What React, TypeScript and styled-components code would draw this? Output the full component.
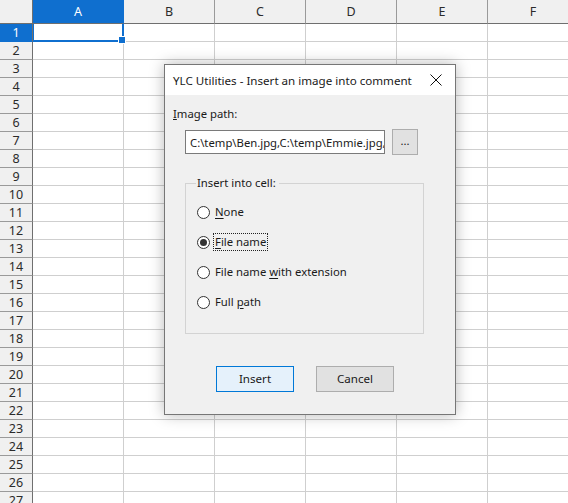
import React, { useState } from "react";
import styled, { createGlobalStyle } from "styled-components";

const GlobalStyle = createGlobalStyle`
  html, body {
    margin: 0;
    padding: 0;
    background: #ffffff;
    overflow: hidden;
  }
  body {
    font-family: "Noto Sans", "Open Sans", sans-serif;
  }
`;

const COLS = ["A", "B", "C", "D", "E", "F"];
const ROWS = Array.from({ length: 27 }, (_, i) => i + 1);

const Page = styled.div`
  position: relative;
  width: 568px;
  height: 503px;
  overflow: hidden;
`;

const Sheet = styled.div`
  display: grid;
  grid-template-columns: 33px repeat(6, 91px);
  grid-auto-rows: 18px;
  grid-template-rows: 24px;
`;

const Corner = styled.div`
  background: #f0f0f0;
  border-right: 1px solid #6f6f6f;
  border-bottom: 1px solid #6f6f6f;
  box-sizing: border-box;
`;

const ColHead = styled.div<{ $active?: boolean }>`
  box-sizing: border-box;
  display: flex;
  align-items: center;
  justify-content: center;
  font-size: 12.5px;
  color: ${(p) => (p.$active ? "#ffffff" : "#2b2b2b")};
  background: ${(p) => (p.$active ? "#0f6fcf" : "#f0f0f0")};
  border-right: 1px solid ${(p) => (p.$active ? "#0f6fcf" : "#9a9a9a")};
  border-bottom: 1px solid #6f6f6f;
`;

const RowHead = styled.div<{ $active?: boolean }>`
  box-sizing: border-box;
  display: flex;
  align-items: center;
  justify-content: center;
  font-size: 12.5px;
  color: ${(p) => (p.$active ? "#ffffff" : "#2b2b2b")};
  background: ${(p) => (p.$active ? "#0f6fcf" : "#f0f0f0")};
  border-right: 1px solid #6f6f6f;
  border-bottom: 1px solid ${(p) => (p.$active ? "#0f6fcf" : "#9a9a9a")};
`;

const Cell = styled.div<{ $selected?: boolean }>`
  position: relative;
  box-sizing: border-box;
  background: #ffffff;
  border-right: 1px solid #cfcfcf;
  border-bottom: 1px solid #cfcfcf;
  ${(p) =>
    p.$selected &&
    `
    border: 2px solid #0f6fcf;
    border-top: none;
    border-left: 1px solid #0f6fcf;
  `}
`;

const FillHandle = styled.span`
  position: absolute;
  right: -4px;
  bottom: -4px;
  width: 6px;
  height: 6px;
  background: #0f6fcf;
  border: 1px solid #ffffff;
  z-index: 1;
`;

const Dialog = styled.div`
  position: absolute;
  left: 164px;
  top: 64px;
  width: 292px;
  height: 351px;
  box-sizing: border-box;
  background: #f0f0f0;
  border: 1px solid #767676;
  box-shadow: 0 0 14px rgba(0, 0, 0, 0.28);
  display: flex;
  flex-direction: column;
  font-family: "Noto Sans", "Open Sans", sans-serif;
  font-size: 11.3px;
  color: #1a1a1a;
`;

const TitleBar = styled.div`
  height: 30px;
  background: #ffffff;
  display: flex;
  align-items: center;
  justify-content: space-between;
  padding: 0 9px 0 8px;
  font-size: 11.6px;
  color: #1a1a1a;
`;

const CloseButton = styled.button`
  border: none;
  background: none;
  padding: 0;
  width: 16px;
  height: 16px;
  display: flex;
  align-items: center;
  justify-content: center;
  margin-right: 2px;
`;

const Body = styled.div`
  flex: 1;
  display: flex;
  flex-direction: column;
  padding: 11px 0 0 8px;
`;

const FieldLabel = styled.div`
  line-height: 16px;
  margin-bottom: 7px;
`;

const PathRow = styled.div`
  display: flex;
  align-items: center;
  gap: 7px;
  padding-left: 12px;
`;

const PathInput = styled.div`
  width: 200px;
  height: 24px;
  box-sizing: border-box;
  background: #ffffff;
  border: 1px solid #7a7a7a;
  padding: 0 0 0 4px;
  display: flex;
  align-items: center;
  overflow: hidden;
  white-space: nowrap;
`;

const SmallButton = styled.button`
  width: 26px;
  height: 26px;
  box-sizing: border-box;
  background: #e1e1e1;
  border: 1px solid #adadad;
  font-family: inherit;
  font-size: 11.3px;
  padding: 0 0 4px;
  color: #1a1a1a;
`;

const Group = styled.fieldset`
  margin: 21px 0 0 12px;
  width: 239px;
  height: 158px;
  box-sizing: border-box;
  border: 1px solid #d3d3d3;
  padding: 13px 0 0 11px;
  display: flex;
  flex-direction: column;
  gap: 12px;
`;

const Legend = styled.legend`
  padding: 0 3px 0 1px;
  margin-left: -1px;
  line-height: 14px;
`;

const RadioRow = styled.label`
  display: flex;
  align-items: center;
  gap: 4px;
  height: 18px;
  cursor: default;
`;

const RadioCircle = styled.span<{ $checked?: boolean }>`
  width: 13px;
  height: 13px;
  box-sizing: border-box;
  border-radius: 50%;
  border: 1px solid #333333;
  background: #ffffff;
  display: flex;
  align-items: center;
  justify-content: center;
  &::after {
    content: "";
    width: 7px;
    height: 7px;
    border-radius: 50%;
    background: ${(p) => (p.$checked ? "#333333" : "transparent")};
  }
`;

const RadioText = styled.span<{ $focused?: boolean }>`
  padding: 0 1px;
  line-height: 16px;
  outline: ${(p) => (p.$focused ? "1px dotted #222222" : "none")};
  u {
    text-underline-offset: 2px;
  }
`;

const Buttons = styled.div`
  display: flex;
  gap: 22px;
  padding-left: 43px;
  margin-top: 32px;
`;

const DialogButton = styled.button<{ $primary?: boolean }>`
  width: 78px;
  height: 26px;
  box-sizing: border-box;
  font-family: inherit;
  font-size: 11.6px;
  color: #1a1a1a;
  background: ${(p) => (p.$primary ? "#e5f1fb" : "#e1e1e1")};
  border: 1px solid ${(p) => (p.$primary ? "#0078d7" : "#adadad")};
  padding: 0 0 1px;
`;

const options = [
  { key: "none", pre: "", u: "N", post: "one" },
  { key: "file", pre: "", u: "F", post: "ile name" },
  { key: "ext", pre: "File name ", u: "w", post: "ith extension" },
  { key: "full", pre: "Full ", u: "p", post: "ath" },
];

const App = () => {
  const [choice, setChoice] = useState<string>("file");

  return (
    <Page>
      <GlobalStyle />
      <Sheet>
        <Corner />
        {COLS.map((c) => (
          <ColHead key={c} $active={c === "A"}>
            {c}
          </ColHead>
        ))}
        {ROWS.map((r) => (
          <React.Fragment key={r}>
            <RowHead $active={r === 1}>{r}</RowHead>
            {COLS.map((c) => {
              const sel = r === 1 && c === "A";
              return (
                <Cell key={c} $selected={sel}>
                  {sel && <FillHandle />}
                </Cell>
              );
            })}
          </React.Fragment>
        ))}
      </Sheet>

      <Dialog>
        <TitleBar>
          <span>YLC Utilities - Insert an image into comment</span>
          <CloseButton>
            <svg width="12" height="12" viewBox="0 0 12 12">
              <path d="M0.5 0.5 L11.5 11.5 M11.5 0.5 L0.5 11.5" stroke="#111" strokeWidth="1" />
            </svg>
          </CloseButton>
        </TitleBar>
        <Body>
          <FieldLabel>
            <u>I</u>mage path:
          </FieldLabel>
          <PathRow>
            <PathInput>C:\temp\Ben.jpg,C:\temp\Emmie.jpg,</PathInput>
            <SmallButton>...</SmallButton>
          </PathRow>
          <Group>
            <Legend>Insert into cell:</Legend>
            {options.map((o) => (
              <RadioRow key={o.key} onClick={() => setChoice(o.key)}>
                <RadioCircle $checked={choice === o.key} />
                <RadioText $focused={choice === o.key}>
                  {o.pre}
                  <u>{o.u}</u>
                  {o.post}
                </RadioText>
              </RadioRow>
            ))}
          </Group>
          <Buttons>
            <DialogButton $primary>Insert</DialogButton>
            <DialogButton>Cancel</DialogButton>
          </Buttons>
        </Body>
      </Dialog>
    </Page>
  );
};

export default App;
